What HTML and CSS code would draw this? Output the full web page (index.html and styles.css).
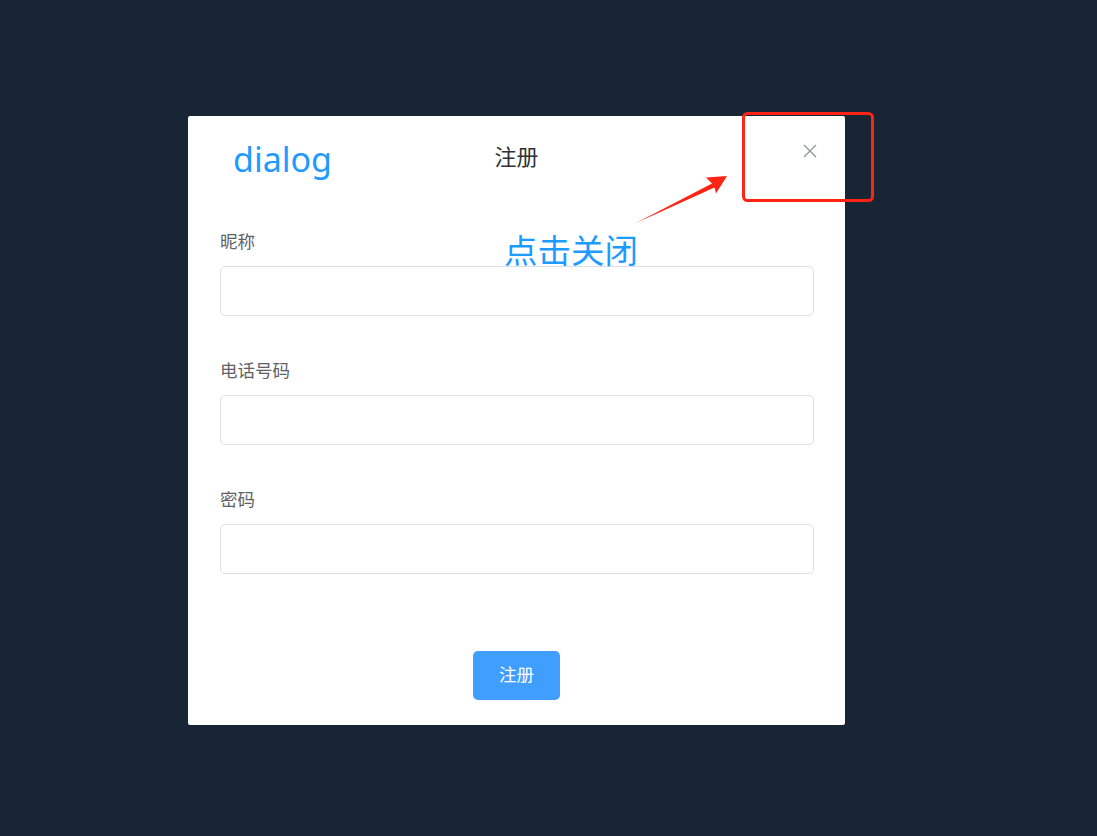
FILE: index.html
```html
<!DOCTYPE html>
<html lang="zh-CN">
<head>
<meta charset="utf-8">
<title>dialog</title>
<link rel="stylesheet" href="styles.css">
</head>
<body>
<div class="page">
  <div class="dialog">
    <div class="dialog-header">
      <div class="brand">dialog</div>
      <div class="title">注册</div>
      <div class="close-cell">
        <button class="close" aria-label="关闭">
          <svg width="14" height="14" viewBox="0 0 14 14"><path d="M1 1L13 13M13 1L1 13" stroke="#909399" stroke-width="1.3" fill="none"/></svg>
        </button>
      </div>
    </div>
    <form class="dialog-body">
      <div class="form-item">
        <label class="label">昵称</label>
        <input class="input" type="text">
      </div>
      <div class="form-item">
        <label class="label">电话号码</label>
        <input class="input" type="text">
      </div>
      <div class="form-item">
        <label class="label">密码</label>
        <input class="input" type="password">
      </div>
    </form>
    <div class="dialog-footer">
      <button class="btn-primary">注册</button>
    </div>
  </div>

  <div class="annotation-text">点击关闭</div>
  <svg class="annotation" width="1097" height="836" viewBox="0 0 1097 836">
    <rect x="743.5" y="113.5" width="129" height="87" rx="4" ry="4" fill="none" stroke="#ff2414" stroke-width="3"/>
    <polygon points="636,223 712,183.5 706,177.5 727,176 716,193.5 714.5,187.5" fill="#ff2414"/>
  </svg>
</div>
</body>
</html>
```

FILE: styles.css
```css
html, body {
  margin: 0;
  padding: 0;
}

body {
  background: #172535;
  font-family: "Noto Sans CJK SC", "Noto Sans", sans-serif;
  width: 1097px;
  height: 836px;
  overflow: hidden;
}

.page {
  position: relative;
  width: 1097px;
  height: 836px;
  padding: 116px 0 0 188px;
  box-sizing: border-box;
}

.dialog {
  width: 657px;
  height: 609px;
  background: #fff;
  border-radius: 2px;
  display: flex;
  flex-direction: column;
  box-sizing: border-box;
}

.dialog-header {
  display: grid;
  grid-template-columns: 1fr auto 1fr;
  align-items: center;
  height: 68px;
  padding: 18px 0 0 0;
  box-sizing: border-box;
}

.brand {
  padding-left: 45px;
  color: #1e9bff;
  font-family: "Noto Sans", "Open Sans", sans-serif;
  font-size: 34px;
  line-height: 44px;
}

.title {
  color: #303133;
  font-size: 22px;
  line-height: 30px;
  margin-top: -8px;
}

.close-cell {
  display: flex;
  justify-content: flex-end;
  padding-right: 28px;
  align-self: start;
  padding-top: 10px;
}

.close {
  background: none;
  border: 0;
  padding: 0;
  width: 14px;
  height: 14px;
  display: flex;
  cursor: pointer;
}

.dialog-body {
  display: flex;
  flex-direction: column;
  gap: 42px;
  padding: 45px 31px 0 32px;
  margin: 0;
}

.form-item {
  display: flex;
  flex-direction: column;
  gap: 13px;
}

.label {
  color: #606266;
  font-size: 17.5px;
  line-height: 24px;
}

.input {
  height: 50px;
  border: 1px solid #dcdfe6;
  border-radius: 5px;
  box-sizing: border-box;
  margin: 0;
  padding: 0 19px;
  font-size: 17px;
  outline: none;
  background: #fff;
}

.dialog-footer {
  margin-top: auto;
  display: flex;
  justify-content: center;
  padding-bottom: 25px;
}

.btn-primary {
  width: 87px;
  height: 49px;
  border: 0;
  border-radius: 5px;
  background: #409eff;
  color: #fff;
  font-family: "Noto Sans CJK SC", sans-serif;
  font-size: 17.5px;
  padding: 0 0 4px 0;
  cursor: pointer;
}

.annotation-text {
  position: absolute;
  left: 504px;
  top: 227px;
  color: #1e9bff;
  font-size: 33.5px;
  line-height: 44px;
  white-space: nowrap;
}

.annotation {
  position: absolute;
  left: 0;
  top: 0;
  pointer-events: none;
}
```
